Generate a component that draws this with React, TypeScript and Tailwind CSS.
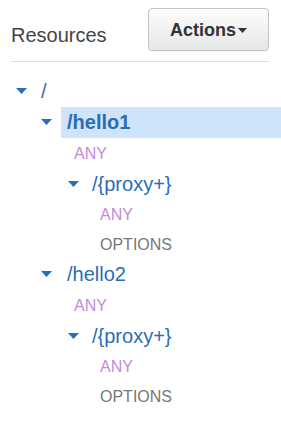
import React from "react";

const Tri = ({ color = "#2a6db5" }: { color?: string }) => (
  <svg width="11" height="6" viewBox="0 0 11 6" className="shrink-0 block">
    <polygon points="0,0 11,0 5.5,6" fill={color} />
  </svg>
);

const Method = ({ name, indent, h }: { name: string; indent: string; h: string }) => {
  const color = name === "ANY" ? "text-[#c48ad8]" : "text-[#777777]";
  return (
    <div className={`flex items-center ${h} ${indent}`}>
      <span className={`text-[16px] leading-[19px] ${color}`}>{name}</span>
    </div>
  );
};

const Group = ({ name, selected }: { name: string; selected?: boolean }) => (
  <>
    <div className="flex items-center h-[31px] pl-[41px]">
      <div className="-mt-[1px]">
        <Tri />
      </div>
      <div
        className={`ml-[9px] flex-1 h-full flex items-center pl-[6px] ${
          selected ? "bg-[#cfe4fa]" : ""
        }`}
      >
        <span
          className={`text-[20px] leading-[23px] text-[#2a6db5] ${
            selected ? "font-bold" : ""
          }`}
        >
          {name}
        </span>
      </div>
    </div>
    <Method name="ANY" indent="pl-[74px]" h="h-[31px]" />
    <div className="flex items-center h-[30px] pl-[68px]">
      <div className="-mt-[1px]">
        <Tri />
      </div>
      <span className="ml-[13px] text-[20px] leading-[23px] text-[#2a6db5]">
        /{"{"}proxy+{"}"}
      </span>
    </div>
    <Method name="ANY" indent="pl-[100px]" h="h-[31px]" />
    <Method name="OPTIONS" indent="pl-[100px]" h="h-[29px]" />
  </>
);

export default function App() {
  return (
    <div
      className="w-[281px] h-[446px] bg-white overflow-hidden"
      style={{ fontFamily: '"Liberation Sans", Arial, sans-serif' }}
    >
      <div className="ml-[11px] mr-[12px] h-[62px] pt-[8px] flex justify-between items-start border-b border-[#dddddd]">
        <span className="mt-[16px] text-[20px] leading-[23px] text-[#444444]">
          Resources
        </span>
        <button className="w-[121px] h-[43px] rounded-[4px] border border-[#c4c4c4] bg-linear-to-b from-[#fdfdfd] to-[#e6e6e6] flex items-center justify-center shadow-[0_1px_1px_rgba(0,0,0,0.05)]">
          <span className="text-[18px] leading-[20px] font-bold text-[#333333]">
            Actions
          </span>
          <svg width="9" height="5" viewBox="0 0 9 5" className="ml-[2px] mt-[1px]">
            <polygon points="0,0 9,0 4.5,5" fill="#333333" />
          </svg>
        </button>
      </div>
      <div className="pt-[13px]">
        <div className="flex items-center h-[32px] pl-[16px]">
          <Tri />
          <span className="ml-[14px] text-[20px] leading-[23px] text-[#2a6db5]">/</span>
        </div>
        <Group name="/hello1" selected />
        <Group name="/hello2" />
      </div>
    </div>
  );
}
